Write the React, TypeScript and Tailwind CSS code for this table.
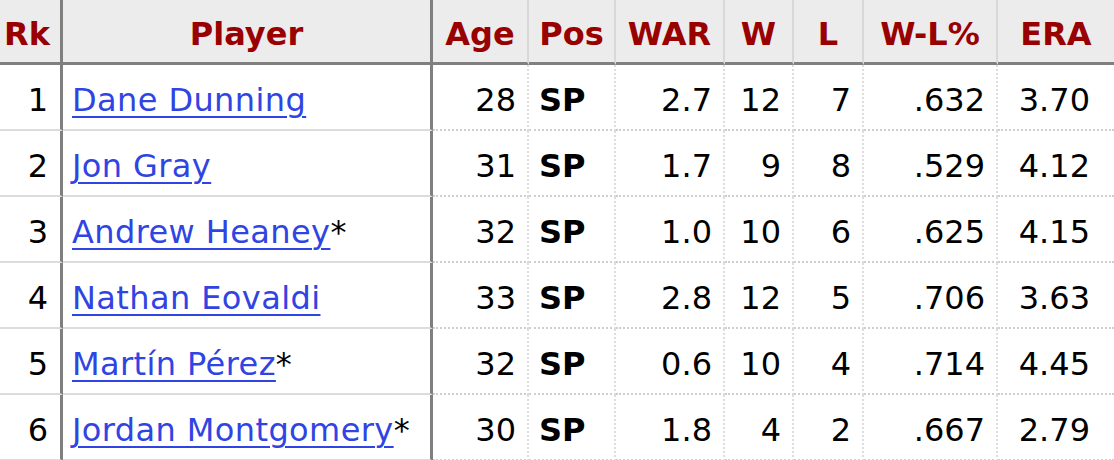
import React from 'react';

interface PitcherRow {
  rk: number;
  name: string;
  lefty: boolean;
  age: number;
  pos: string;
  war: string;
  w: number;
  l: number;
  pct: string;
  era: string;
}

const rows: PitcherRow[] = [
  { rk: 1, name: 'Dane Dunning', lefty: false, age: 28, pos: 'SP', war: '2.7', w: 12, l: 7, pct: '.632', era: '3.70' },
  { rk: 2, name: 'Jon Gray', lefty: false, age: 31, pos: 'SP', war: '1.7', w: 9, l: 8, pct: '.529', era: '4.12' },
  { rk: 3, name: 'Andrew Heaney', lefty: true, age: 32, pos: 'SP', war: '1.0', w: 10, l: 6, pct: '.625', era: '4.15' },
  { rk: 4, name: 'Nathan Eovaldi', lefty: false, age: 33, pos: 'SP', war: '2.8', w: 12, l: 5, pct: '.706', era: '3.63' },
  { rk: 5, name: 'Martín Pérez', lefty: true, age: 32, pos: 'SP', war: '0.6', w: 10, l: 4, pct: '.714', era: '4.45' },
  { rk: 6, name: 'Jordan Montgomery', lefty: true, age: 30, pos: 'SP', war: '1.8', w: 4, l: 2, pct: '.667', era: '2.79' },
];

const headers = ['Rk', 'Player', 'Age', 'Pos', 'WAR', 'W', 'L', 'W-L%', 'ERA'];

// header cell borders: thick after Rk and Player, light elsewhere
const headBorder = [
  'border-r-[3px] border-r-[#7f7f7f] pr-[6px]',
  'border-r-[3px] border-r-[#7f7f7f]',
  'border-r-2 border-r-[#d8d8d8]',
  'border-r-2 border-r-[#d8d8d8]',
  'border-r-2 border-r-[#d8d8d8]',
  'border-r-2 border-r-[#d8d8d8]',
  'border-r-2 border-r-[#d8d8d8]',
  'border-r-2 border-r-[#d8d8d8]',
  '',
];

const solidRow = 'border-b-2 border-b-[#dcdcdc]';
const dotRow = 'border-b-2 border-dotted border-b-[#cfcfcf]';
const statCell = `h-[66px] pt-[6px] flex items-center justify-end pr-[11px] border-r-2 border-r-[#dedede] ${dotRow}`;

export default function App() {
  return (
    <div className="w-[1114px] h-[460px] overflow-hidden bg-white text-[32px] text-black font-['DejaVu_Sans','Verdana',sans-serif]">
      <div className="grid grid-cols-[63px_370px_96px_87px_109px_69px_70px_134px_116px]">
        {headers.map((h, i) => (
          <div
            key={h}
            className={`h-[65px] pt-[6px] bg-[#ececec] flex items-center justify-center font-bold text-[#990000] border-b-[3px] border-b-[#7f7f7f] ${headBorder[i]}`}
          >
            {h}
          </div>
        ))}

        {rows.map(r => (
          <React.Fragment key={r.rk}>
            <div className={`h-[66px] pt-[6px] flex items-center justify-end pr-[12px] border-r-[3px] border-r-[#7f7f7f] ${solidRow}`}>
              {r.rk}
            </div>
            <div className={`h-[66px] pt-[6px] flex items-center pl-[9px] border-r-[3px] border-r-[#7f7f7f] whitespace-nowrap ${solidRow}`}>
              <a href="#" className="text-[#2f44e3] tracking-[0.4px] underline decoration-2 underline-offset-[5px]">{r.name}</a>
              {r.lefty && <span>*</span>}
            </div>
            <div className={statCell}>{r.age}</div>
            <div className={`h-[66px] pt-[6px] flex items-center pl-[10px] font-bold border-r-2 border-r-[#dedede] ${dotRow}`}>{r.pos}</div>
            <div className={statCell}>{r.war}</div>
            <div className={statCell}>{r.w}</div>
            <div className={statCell}>{r.l}</div>
            <div className={statCell}>{r.pct}</div>
            <div className={`h-[66px] pt-[6px] flex items-center justify-end pr-[24px] ${dotRow}`}>{r.era}</div>
          </React.Fragment>
        ))}
      </div>
    </div>
  );
}
